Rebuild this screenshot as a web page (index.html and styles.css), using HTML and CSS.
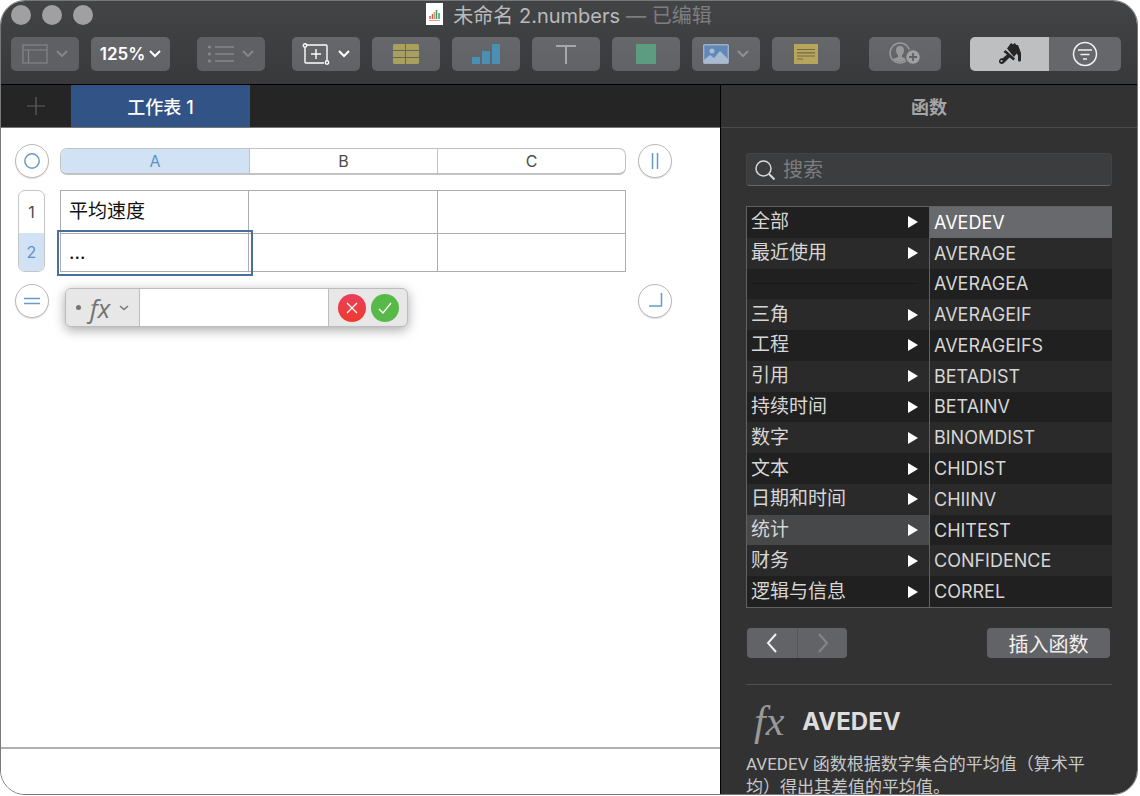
FILE: index.html
```html
<!DOCTYPE html>
<html lang="zh-CN">
<head>
<meta charset="utf-8">
<title>未命名 2.numbers</title>
<link rel="stylesheet" href="styles.css">
</head>
<body>
<div class="window">
  <header class="chrome">
    <div class="titlebar">
      <div class="lights"><span class="light"></span><span class="light"></span><span class="light"></span></div>
      <div class="title">
        <svg class="doc-icon" width="17" height="22" viewBox="0 0 17 22"><path fill="#fff" d="M0 0h17v22H0z"/><path stroke="#e0564a" stroke-width="1.5" d="M4 16v-3M6.500 16V11"/><path stroke="#c9a36a" stroke-width="1.500" d="M8.500 16V9"/><path stroke="#3a9b6c" stroke-width="1.500" d="M10.500 16V7M13 16v-6"/><path stroke="#e89a92" d="M3 17.500h11"/></svg>
        <span class="doc-name">未命名 2.numbers</span>
        <span class="doc-state">— 已编辑</span>
      </div>
    </div>
    <div class="toolbar">
      <button class="tool dim" aria-label="显示">
        <svg width="26" height="20" viewBox="0 0 26 20" fill="none" stroke="#858688" stroke-width="1.200"><rect x="1" y="1" width="24" height="18"/><path d="M1 6h24M6.500 6v13"/></svg>
        <svg width="12" height="8" viewBox="0 0 12 8" fill="none" stroke="#858688" stroke-width="2"><path d="M1 1l5 5 5-5"/></svg>
      </button>
      <button class="tool zoom">125%<svg width="12" height="8" viewBox="0 0 12 8" fill="none" stroke="#fff" stroke-width="2"><path d="M1 1l5 5 5-5"/></svg></button>
      <button class="tool dim space" aria-label="列表">
        <svg width="26" height="20" viewBox="0 0 26 20" fill="none" stroke="#858688"><path stroke-width="1.300" d="M7 3h19M7 10h19M7 17h19"/><path stroke-width="2.500" d="M0 3h3M0 10h3M0 17h3"/></svg>
        <svg width="12" height="8" viewBox="0 0 12 8" fill="none" stroke="#858688" stroke-width="2"><path d="M1 1l5 5 5-5"/></svg>
      </button>
      <button class="tool space" aria-label="插入">
        <svg width="28" height="22" viewBox="0 0 28 22" fill="none" stroke="#fff" stroke-width="1.400"><path d="M5 2h19q1 0 1 1v14M22 20H4q-1 0-1-1V5M14 6v10M9 11h10"/><circle cx="3" cy="2.500" r="1.700"/><circle cx="25" cy="19.500" r="1.700"/></svg>
        <svg width="12" height="8" viewBox="0 0 12 8" fill="none" stroke="#fff" stroke-width="2"><path d="M1 1l5 5 5-5"/></svg>
      </button>
      <button class="tool" aria-label="表格"><svg width="26" height="20" viewBox="0 0 26 20" fill="#a8a05c"><path d="M1 0h11v6H0V1zM13 0h12l1 1v5H13zM0 7h12v6H0zM13 7h13v6H13zM0 14h12v6H1l-1-1zM13 14h13v5l-1 1H13z"/></svg></button>
      <button class="tool" aria-label="图表"><svg width="30" height="20" viewBox="0 0 30 20" fill="#4a90b4"><path d="M1 13h8v7H1zM11 7h8v13h-8zM21 0h8v20h-8z"/></svg></button>
      <button class="tool" aria-label="文本"><svg width="20" height="20" viewBox="0 0 20 20" fill="none" stroke="#a6a7a9" stroke-width="2"><path d="M0 2h20M10 2v18"/></svg></button>
      <button class="tool" aria-label="形状"><svg width="20" height="20" viewBox="0 0 20 20"><path fill="#5e9c7f" d="M0 0h20v20H0z"/></svg></button>
      <button class="tool" aria-label="媒体">
        <svg width="26" height="20" viewBox="0 0 26 20"><rect x=".7" y=".7" width="24.600" height="18.600" rx="1" fill="#6189b8" stroke="#9eafc6" stroke-width="1.400"/><circle cx="9" cy="7" r="2.500" fill="#a9bbd0"/><path fill="#a9bbd0" d="M1 16l6-5 4 3 6-7 8 8v4H1z"/></svg>
        <svg width="12" height="8" viewBox="0 0 12 8" fill="none" stroke="#8f9092" stroke-width="2"><path d="M1 1l5 5 5-5"/></svg>
      </button>
      <button class="tool" aria-label="批注"><svg width="24" height="20" viewBox="0 0 24 20"><path fill="#b7a45d" d="M0 0h24v20H0z"/><path stroke="#736a48" stroke-width="1.200" d="M3 5.500h18M3 8.800h18M3 12h18M3 15h6"/></svg></button>
      <button class="tool collab" aria-label="协作"><svg width="32" height="24" viewBox="0 0 32 24"><circle cx="11" cy="11" r="10" fill="none" stroke="#97989a" stroke-width="1.500"/><path fill="#97989a" d="M11 4c-3 0-4 2-4 4 0 3 1 4 2 5v2l-5 2c2 2 4 3 7 3s5-1 7-3l-5-2v-2c1-1 2-2 2-5 0-2-1-4-4-4z"/><circle cx="24" cy="15" r="7.500" fill="#a0a1a3" stroke="#65666a" stroke-width="1.500"/><path stroke="#606164" stroke-width="1.800" d="M24 11v8M20 15h8"/></svg></button>
      <div class="segment">
        <button class="seg on" aria-label="格式"><svg width="24" height="24" viewBox="0 0 24 24" fill="#252525"><path d="M9 6.500L13 1l2 1.500L16.500 1l2 2L20 3l3 8v6.500c0 3-3 3-3 0v-4l-1.500-2L16 15z"/><path d="M7.500 8l9.500 8.500-1.500 2-4-3-5.500 5.500c-3 3-7-1-4-4 1-1 2-.5 3-1L9 12.500 5.500 10z"/><circle cx="3.500" cy="19" r="1" fill="#bebfc1"/></svg></button>
        <button class="seg" aria-label="整理"><svg width="26" height="26" viewBox="0 0 26 26" fill="none" stroke="#f2f2f2" stroke-width="1.500"><circle cx="13" cy="13" r="11.500"/><path d="M6 9h14M8.500 13.500h9M11 18h4"/></svg></button>
      </div>
    </div>
  </header>
  <div class="body">
    <main class="main">
      <nav class="tabs">
        <button class="add" aria-label="添加工作表"><svg width="18" height="18" viewBox="0 0 18 18" stroke="#626262" stroke-width="1.200"><path d="M9 0v18M0 9h18"/></svg></button>
        <button class="tab">工作表 1</button>
      </nav>
      <section class="canvas">
        <div class="sheet">
          <button class="knob" aria-label="表格手柄"><svg width="18" height="18" viewBox="0 0 18 18" fill="none" stroke="#659bcb" stroke-width="1.500"><circle cx="9" cy="9" r="7.200"/></svg></button>
          <div class="cols"><span class="on">A</span><span>B</span><span>C</span></div>
          <button class="knob" aria-label="添加列"><svg width="18" height="18" viewBox="0 0 18 18" stroke="#659bcb" stroke-width="1.500"><path d="M6.500 1v16M11.500 1v16"/></svg></button>
          <div class="rows"><span>1</span><span class="on">2</span></div>
          <table class="grid">
            <tr><td>平均速度</td><td></td><td></td></tr>
            <tr><td class="active">...</td><td></td><td></td></tr>
          </table>
          <span></span>
          <button class="knob low" aria-label="添加行"><svg width="18" height="18" viewBox="0 0 18 18" stroke="#659bcb" stroke-width="1.500"><path d="M1 6.500h16M1 11.500h16"/></svg></button>
          <div class="formula">
            <button class="fx"><span class="dot"></span><i>fx</i><svg width="10" height="6" viewBox="0 0 10 6" fill="none" stroke="#777" stroke-width="1.500"><path d="M1 1l4 3.500L9 1"/></svg></button>
            <input class="formula-input" type="text" aria-label="公式">
            <div class="confirm">
              <button class="round no" aria-label="取消"><svg width="12" height="12" viewBox="0 0 12 12" stroke="#fff" stroke-width="1.300"><path d="M1 1l10 10M11 1L1 11"/></svg></button>
              <button class="round yes" aria-label="接受"><svg width="14" height="12" viewBox="0 0 14 12" fill="none" stroke="#fff" stroke-width="1.300"><path d="M1 7l4 4 8-10"/></svg></button>
            </div>
          </div>
          <button class="knob low" aria-label="添加行和列"><svg width="18" height="18" viewBox="0 0 18 18" fill="none" stroke="#659bcb" stroke-width="1.500"><path d="M15.500 1v13H3"/></svg></button>
        </div>
      </section>
      <footer class="status"></footer>
    </main>
    <aside class="side">
      <h2 class="side-title">函数</h2>
      <div class="panel">
        <label class="search">
          <svg width="20" height="20" viewBox="0 0 20 20" fill="none" stroke="#d8d8d8" stroke-width="1.500"><circle cx="8.500" cy="8.500" r="7.500"/><path stroke-width="2" d="M14 14l5.500 5.500"/></svg>
          <input type="text" placeholder="搜索" aria-label="搜索">
        </label>
        <div class="browser">
          <ul class="cats">
            <li><span>全部</span><b></b></li><li><span>最近使用</span><b></b></li><li class="sep"><hr></li><li><span>三角</span><b></b></li><li><span>工程</span><b></b></li><li><span>引用</span><b></b></li><li><span>持续时间</span><b></b></li><li><span>数字</span><b></b></li><li><span>文本</span><b></b></li><li><span>日期和时间</span><b></b></li><li class="on"><span>统计</span><b></b></li><li><span>财务</span><b></b></li><li><span>逻辑与信息</span><b></b></li>
          </ul>
          <ul class="funcs">
            <li class="on">AVEDEV</li><li>AVERAGE</li><li>AVERAGEA</li><li>AVERAGEIF</li><li>AVERAGEIFS</li><li>BETADIST</li><li>BETAINV</li><li>BINOMDIST</li><li>CHIDIST</li><li>CHIINV</li><li>CHITEST</li><li>CONFIDENCE</li><li>CORREL</li>
          </ul>
        </div>
        <div class="actions">
          <div class="pager">
            <button aria-label="后退"><svg width="12" height="20" viewBox="0 0 12 20" fill="none" stroke="#f0f0f0" stroke-width="2"><path d="M10 1L2 10l8 9"/></svg></button>
            <button aria-label="前进"><svg width="12" height="20" viewBox="0 0 12 20" fill="none" stroke="#858689" stroke-width="2"><path d="M2 1l8 9-8 9"/></svg></button>
          </div>
          <button class="insert">插入函数</button>
        </div>
        <div class="detail">
          <h3><i>fx</i><span>AVEDEV</span></h3>
          <p>AVEDEV 函数根据数字集合的平均值（算术平均）得出其差值的平均值。</p>
        </div>
      </div>
    </aside>
  </div>
</div>
</body>
</html>
```
FILE: styles.css
```css
* { box-sizing: border-box; }
body { margin: 0; background: #fff; font-family: Inter, "Noto Sans CJK SC", sans-serif; }
button { border: 0; padding: 0; margin: 0; font: inherit; color: inherit; display: flex; align-items: center; justify-content: center; }
input { font: inherit; border: 0; outline: 0; padding: 0; min-width: 0; }
ul { list-style: none; margin: 0; padding: 0; }
svg { flex: none; }
.window { height: calc(100vh - 1px); margin-right: 2px; border: 1px solid #77787a; border-radius: 25px; overflow: hidden; display: flex; flex-direction: column; }
.chrome { background: linear-gradient(#434446, #38393a); border-bottom: 1px solid #000; padding-bottom: 13px; }
.titlebar { height: 36px; padding: 0 10px; display: grid; grid-template-columns: 1fr auto 1fr; }
.lights { display: flex; gap: 11px; padding-top: 4px; }
.light { width: 20px; height: 20px; border-radius: 50%; background: #a0a0a2; }
.title { display: flex; align-items: center; height: 26px; font-size: 20px; color: #b9babc; white-space: nowrap; }
.doc-icon { margin-right: 10px; }
.doc-state { color: #7d7e80; margin-left: 6px; }
.toolbar { display: flex; gap: 12px; padding: 0 16px 0 10px; }
.tool { width: 68px; height: 34px; border-radius: 5px; background: linear-gradient(#66676a, #616265); gap: 8px; }
.tool.dim { background: #5f6063; }
.tool.zoom { width: 79px; color: #fff; font-size: 17px; font-weight: 600; gap: 4px; }
.space { margin-left: 15px; }
.collab { width: 72px; margin-left: 17px; }
.segment { display: flex; margin-left: auto; border-radius: 5px; overflow: hidden; }
.seg { width: 72px; height: 34px; background: #66676a; }
.seg.on { width: 79px; background: #bebfc1; }
.body { flex: 1; min-height: 0; display: flex; }
.main { flex: 1; min-width: 0; display: flex; flex-direction: column; background: #fff; border-right: 1px solid #000; }
.tabs { height: 43px; display: flex; background: #252525; border-bottom: 1px solid #77787a; }
.add { width: 70px; background: none; }
.tab { width: 179px; background: #315385; color: #fff; font-size: 18px; font-weight: 500; }
.canvas { flex: 1; padding: 16px 14px; }
.sheet { display: grid; grid-template-columns: 33px 566px 33px; column-gap: 12px; row-gap: 12px; align-items: center; justify-items: center; }
.knob { width: 34px; height: 34px; border-radius: 50%; border: 1px solid #bdb8b5; background: #fff; box-shadow: 0 1px 1px #ddd; }
.knob.low { align-self: start; }
.cols { display: grid; grid-template-columns: repeat(3, 1fr); width: 100%; height: 27px; border: 1px solid #c2c2c2; border-bottom-width: 2px; border-radius: 7px; overflow: hidden; font-size: 16px; color: #4c4c4c; }
.cols span { display: flex; align-items: center; justify-content: center; border-left: 1px solid #c2c2c2; }
.cols span:first-child { border-left: 0; }
.cols .on, .rows .on { background: #d2e2f5; color: #5c92c6; }
.rows { width: 27px; height: 82px; display: grid; grid-template-rows: 42px 1fr; border: 1px solid #c4c4c4; border-radius: 7px; overflow: hidden; font-size: 16px; color: #4c4c4c; }
.rows span { display: flex; align-items: center; justify-content: center; }
.grid { width: 100%; border-collapse: collapse; table-layout: fixed; color: #111; font-size: 19px; line-height: 24px; }
.grid td { border: 1px solid #adadad; padding: 0 8px; height: 43px; }
.grid tr + tr td { height: 38px; }
.grid .active { outline: 2px solid #4a6f9f; outline-offset: 2px; }
.formula { justify-self: start; margin: 4px 0 0 5px; width: 343px; height: 39px; display: flex; border: 1px solid #bcbcbc; border-radius: 6px; background: #e7e7e7; box-shadow: 0 3px 12px rgba(0, 0, 0, .35); overflow: hidden; }
.fx { width: 73px; background: #e7e7e7; color: #747474; gap: 9px; font: 26px/34px "Open Sans", sans-serif; }
.dot { width: 5px; height: 5px; border-radius: 50%; background: #747474; }
.formula-input { flex: 1; background: #fff; border: solid #bcbcbc; border-width: 0 1px; font-size: 19px; }
.confirm { width: 78px; display: flex; gap: 5px; align-items: center; justify-content: center; }
.round { width: 28px; height: 28px; border-radius: 50%; }
.no { background: linear-gradient(#e8405c, #ee3b2c); }
.yes { background: #57b947; }
.status { height: 47px; border-top: 2px solid #b0b0b0; }
.side { width: 416px; background: #323232; color: #d6d6d6; }
.side-title { margin: 0; height: 43px; display: flex; align-items: center; justify-content: center; border-bottom: 1px solid #4a4a4a; font-size: 18px; font-weight: 700; color: #a5a5a5; }
.panel { padding: 25px 25px 0; }
.search { display: flex; align-items: center; gap: 8px; height: 33px; padding: 0 8px; background: #3c3d3f; border: 1px solid #434446; border-bottom-color: #646566; border-radius: 4px; }
.search input { flex: 1; background: none; color: #ddd; font-size: 20px; }
.search input::placeholder { color: #7c7d7f; }
.browser { margin-top: 20px; height: 402px; display: grid; grid-template-columns: 182px 1fr; border: 1px solid #626263; border-right: 0; }
.cats, .funcs { display: grid; grid-auto-rows: 1fr; min-height: 0; }
.funcs { border-left: 1px solid #626263; font-size: 18px; }
.cats { font-size: 19px; line-height: 24px; }
.browser li { display: flex; align-items: center; justify-content: space-between; padding: 0 11px 0 4px; min-height: 0; background: #202020; }
.browser li:nth-child(even) { background: #2a2a2a; }
.browser .cats .on { background: #47484a; }
.browser .funcs .on { background: #68696c; color: #fff; }
.sep hr { flex: 1; margin: 0; border: 0; border-top: 1px solid #191919; }
.cats b { border-left: 10px solid #fff; border-top: 6px solid transparent; border-bottom: 6px solid transparent; }
.actions { display: flex; justify-content: space-between; margin: 20px 2px 26px 1px; }
.pager { display: flex; border-radius: 4px; overflow: hidden; }
.pager button { width: 50px; height: 30px; background: #626367; }
.pager button + button { border-left: 1px solid #545558; }
.insert { width: 123px; height: 30px; border-radius: 4px; background: #626367; color: #f0f0f0; font-size: 20px; }
.detail { border-top: 1px solid #505050; padding-top: 6px; }
.detail h3 { margin: 0 0 2px; height: 60px; display: flex; align-items: center; gap: 18px; padding-left: 8px; font-size: 24px; color: #dedede; }
.detail h3 i { font: italic 42px/48px "Liberation Serif", serif; color: #999; }
.detail p { margin: 0; padding-right: 20px; font: 17px/23px Roboto, "Noto Sans CJK SC", sans-serif; color: #c8c8c8; }
```
